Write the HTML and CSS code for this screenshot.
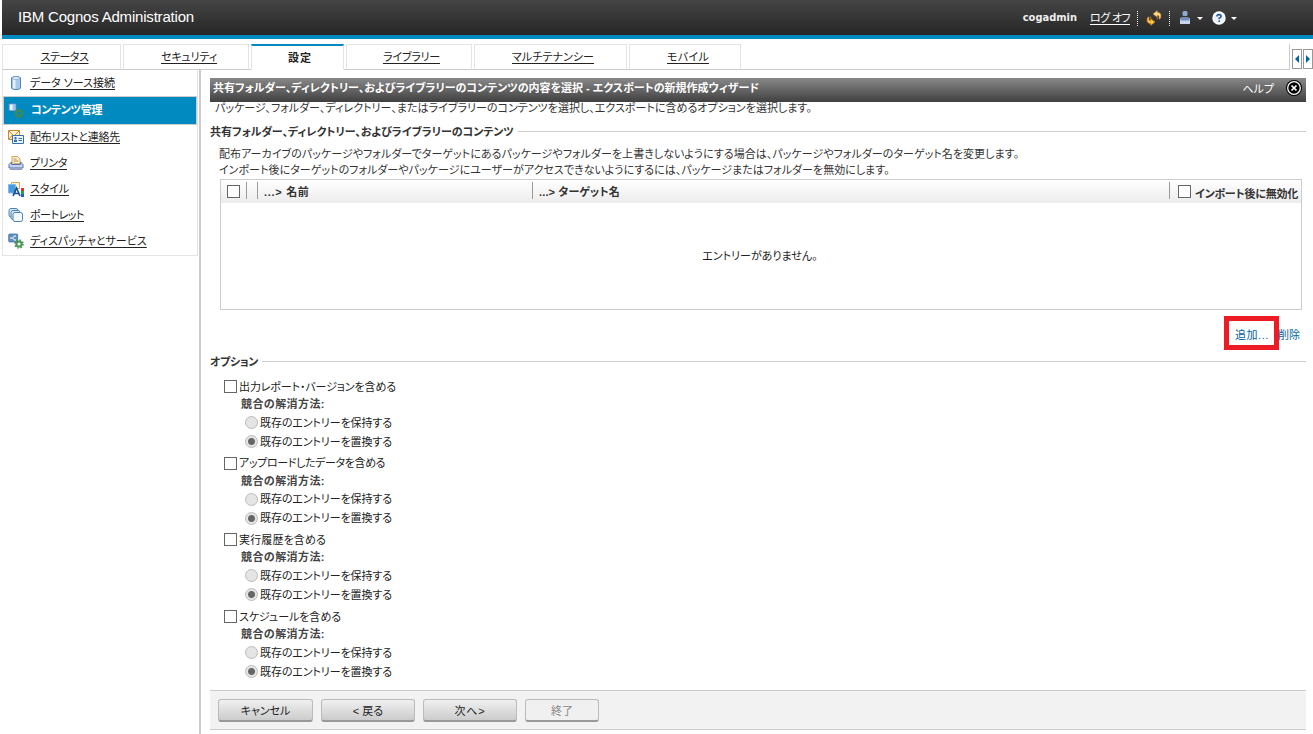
FILE: index.html
```
<!DOCTYPE html>
<html lang="ja">
<head>
<meta charset="utf-8">
<title>IBM Cognos Administration</title>
<link rel="stylesheet" href="styles.css">
</head>
<body>
<div class="banner">
	<span class="product">IBM Cognos Administration</span>
	<span class="user">cogadmin</span>
	<a class="logoff">ログ オフ</a>
	<span class="sep"></span>
	<svg class="refresh" width="16" height="16" viewBox="0 0 16 16"><path d="M11.300 9.500V7.500L7 4.200L11.300 .8V2.700H13L14.800 4.500V8.300L13 9.500V6.500L12.300 5.700H11.300z" transform="translate(0 -.3)" fill="#ffd98a" stroke="#c98718" stroke-width=".5"/><path d="M4.700 6.700V8.700L9 12L4.700 15.400V13.500H3L1.200 11.700V7.900L3 6.700V9.700L3.700 10.500H4.700z" fill="#ffc040" stroke="#c98718" stroke-width=".5"/></svg>
	<span class="sep"></span>
	<svg class="person" width="12" height="14" viewBox="0 0 12 14"><rect x="3.500" y="0" width="5" height="5" rx="1.500" fill="#8fa9d4"/><path d="M1 13V8Q1 6.500 3 6.500H9Q11 6.500 11 8V13z" fill="#c8d6ec"/><path d="M1.500 7h9v2.500h-9z" fill="#6f8fc4"/></svg>
	<span class="caret"></span>
	<svg class="question" width="14" height="14" viewBox="0 0 14 14"><circle cx="7" cy="7" r="6.700" fill="#fff"/><circle cx="7" cy="7" r="5.200" fill="#eaf2fb"/><path d="M5 5.500Q5 3.700 7 3.700T9 5.400Q9 6.300 7.200 7.300V8.300M7.200 9.500V11" fill="none" stroke="#2a5d9f" stroke-width="1.700"/></svg>
	<span class="caret"></span>
</div>

<div class="tabs">
	<div class="tab status"><a>ステータス</a></div>
	<div class="tab security"><a>セキュリティ</a></div>
	<div class="tab settings active"><span>設定</span></div>
	<div class="tab library"><a>ライブラリー</a></div>
	<div class="tab tenancy"><a>マルチテナンシー</a></div>
	<div class="tab mobile"><a>モバイル</a></div>
	<div class="tabrest"></div>
	<div class="scrollers">
		<span class="scroller"><svg width="4" height="8" viewBox="0 0 4 8"><path d="M4 0V8L0 4z" fill="#00649d"/></svg></span>
		<span class="scroller"><svg width="4" height="8" viewBox="0 0 4 8"><path d="M0 0V8L4 4z" fill="#00649d"/></svg></span>
	</div>
</div>

<div class="main">
	<div class="side">
		<ul class="menu">
			<li><svg width="16" height="16" viewBox="0 0 16 16"><path d="M3.500 3Q3.500 1.500 8 1.500T12.500 3V13Q12.500 14.500 8 14.500T3.500 13z" fill="#a5c8ee" stroke="#5584bd"/><path d="M5 4.500h2.500v9H5z" fill="#e4f0fc"/><ellipse cx="8" cy="3" rx="4" ry="1.300" fill="#e9f3fd" stroke="#6b97cb" stroke-width=".6"/></svg><a>データ ソース接続</a></li>
			<li class="current"><svg width="16" height="16" viewBox="0 0 16 16"><path d="M.8 2.500Q.8 1.500 4.500 1.500T8.200 2.500V8Q8.200 9 4.500 9T.8 8z" fill="#9cc6ee" stroke="#3f77b5" stroke-width=".7"/><path d="M2 2.700h2.500v5.300h-2.500z" fill="#f2f8fe"/><circle cx="11" cy="11.500" r="2.700" fill="none" stroke="#3f8a55" stroke-width="2"/><circle cx="11" cy="11.500" r="4" fill="none" stroke="#3f8a55" stroke-width="1.500" stroke-dasharray="1.570"/></svg><b class="manage">コンテンツ管理</b></li>
			<li><svg width="16" height="16" viewBox="0 0 16 16"><path d="M.5 1.500h11v9H.5z" fill="#fff1cf" stroke="#c98a35"/><path d="M1 2l5 5l5-5M1 10l3.500-4" fill="none" stroke="#c98a35"/><path d="M4.500 6.500h11v8h-11z" fill="#edf5ff" stroke="#3a6ea9"/><path d="M6 13v-2h3v2zM6.500 8h2v2.500h-2z" fill="#3a6ea9"/><path d="M10.500 9.500H14M10.500 11.500H14" stroke="#3a6ea9"/></svg><a class="contacts">配布リストと連絡先</a></li>
			<li><svg width="16" height="16" viewBox="0 0 16 16"><path d="M4 8V1.500h5.500L12 4v5z" fill="#fff2d2" stroke="#d0a251"/><path d="M5.500 4h3M5.500 6h5" stroke="#a98b58"/><path d="M3.500 7L1 9.500V13h14V9.500L12.500 7V9.500h-9z" fill="#c4d3ee" stroke="#5a6fae"/><path d="M2 13.500h12v1.500H2z" fill="#8e9bc8"/></svg><a class="printers">プリンタ</a></li>
			<li><svg width="16" height="16" viewBox="0 0 16 16"><path d="M3.500 1.500h8v6h-8z" fill="#fff7df" stroke="#d9a74d"/><path d="M.5 3.500h7v8.500h-7z" fill="#4a9ae0" stroke="#7dbaf0"/><path d="M5 15L8.500 7L12 15M6.500 12.500h4" fill="none" stroke="#174f91" stroke-width="1.700"/><path d="M13 7h3v3h-3z" fill="#d33"/><path d="M13 10h3v3h-3z" fill="#2aa34a"/><path d="M13 13h3v3h-3z" fill="#2563b8"/></svg><a class="styles">スタイル</a></li>
			<li><svg width="16" height="16" viewBox="0 0 16 16"><g fill="#d9eafa" stroke="#4b80b0"><rect x="1" y="1.500" width="9" height="8.500" rx="2"/><rect x="3" y="3.500" width="9" height="9" rx="2"/><rect x="5" y="5.500" width="9.500" height="9" rx="2" fill="#f2f9ff"/></g></svg><a class="portlets">ポートレット</a></li>
			<li><svg width="16" height="16" viewBox="0 0 16 16"><rect x=".7" y="1" width="9" height="8" rx="1" fill="#5e8fc6" stroke="#38679c" stroke-width=".7"/><path d="M2 5h2.500L6.500 3M4.500 5L6.500 7M6 3h2M6 7h2" fill="none" stroke="#fff"/><circle cx="11" cy="11" r="2.600" fill="none" stroke="#489555" stroke-width="2"/><circle cx="11" cy="11" r="4" fill="none" stroke="#489555" stroke-width="1.600" stroke-dasharray="1.570"/></svg><a>ディスパッチャとサービス</a></li>
		</ul>
	</div>

	<div class="content">
		<div class="titlebar">
			<b class="title">共有フォルダー、ディレクトリー、およびライブラリーのコンテンツの内容を選択 - エクスポートの新規作成ウィザード</b>
			<span class="help">ヘルプ</span>
			<svg width="16" height="16" viewBox="0 0 16 16"><circle cx="8" cy="8" r="8" fill="#000"/><circle cx="8" cy="8" r="6.300" fill="none" stroke="#fff" stroke-width="1.300"/><path d="M5.500 5.500l5 5M10.500 5.500l-5 5" stroke="#fff" stroke-width="1.700"/></svg>
		</div>
		<div class="intro"><span>パッケージ、フォルダー、ディレクトリー、またはライブラリーのコンテンツを選択し、エクスポートに含めるオプションを選択します。</span></div>
		<div class="section contents"><b>共有フォルダー、ディレクトリー、およびライブラリーのコンテンツ</b></div>
		<div class="hint">
			<div><span class="hint1">配布アーカイブのパッケージやフォルダーでターゲットにあるパッケージやフォルダーを上書きしないようにする場合は、パッケージやフォルダーのターゲット名を変更します。</span></div>
			<div><span class="hint2">インポート後にターゲットのフォルダーやパッケージにユーザーがアクセスできないようにするには、パッケージまたはフォルダーを無効にします。</span></div>
		</div>

		<div class="grid">
			<div class="gridhead">
				<div class="col check"><span class="box"></span></div>
				<div class="col blank"></div>
				<div class="col name"><b>...&gt; 名前</b></div>
				<div class="col target"><b>...&gt; ターゲット名</b></div>
				<div class="col disable"><span class="box"></span><b>インポート後に無効化</b></div>
			</div>
			<div class="empty"><span>エントリーがありません。</span></div>
		</div>
		<div class="actions">
			<a class="add"><span>追加...</span><i class="mark"></i></a>
			<a class="remove">削除</a>
		</div>

		<div class="section options"><b>オプション</b></div>
		<div class="group">
			<div class="opt"><span class="box"></span><span class="reports">出力レポート・バージョンを含める</span></div>
			<div class="how"><b>競合の解消方法:</b></div>
			<div class="choice"><span class="radio"></span><span class="label">既存のエントリーを保持する</span></div>
			<div class="choice"><span class="radio on"></span><span class="label">既存のエントリーを置換する</span></div>
		</div>
		<div class="group">
			<div class="opt"><span class="box"></span><span class="uploads">アップロードしたデータを含める</span></div>
			<div class="how"><b>競合の解消方法:</b></div>
			<div class="choice"><span class="radio"></span><span class="label">既存のエントリーを保持する</span></div>
			<div class="choice"><span class="radio on"></span><span class="label">既存のエントリーを置換する</span></div>
		</div>
		<div class="group">
			<div class="opt"><span class="box"></span><span class="history">実行履歴を含める</span></div>
			<div class="how"><b>競合の解消方法:</b></div>
			<div class="choice"><span class="radio"></span><span class="label">既存のエントリーを保持する</span></div>
			<div class="choice"><span class="radio on"></span><span class="label">既存のエントリーを置換する</span></div>
		</div>
		<div class="group">
			<div class="opt"><span class="box"></span><span class="schedules">スケジュールを含める</span></div>
			<div class="how"><b>競合の解消方法:</b></div>
			<div class="choice"><span class="radio"></span><span class="label">既存のエントリーを保持する</span></div>
			<div class="choice"><span class="radio on"></span><span class="label">既存のエントリーを置換する</span></div>
		</div>

		<div class="footer">
			<button class="cancel">キャンセル</button>
			<button>&lt; 戻る</button>
			<button class="next">次へ&gt;</button>
			<button class="finish" disabled>終了</button>
		</div>
	</div>
</div>
</body>
</html>
```
FILE: styles.css
```
* {
  box-sizing: border-box;
}

body {
  margin: 0;
  height: 734px;
  overflow: hidden;
  background: #fff;
  color: #222;
  font: 11px/16px "Liberation Sans", "Noto Sans CJK JP", sans-serif;
  font-feature-settings: "palt";
}

b, span, a {
  white-space: nowrap;
}

svg {
  display: block;
  flex: none;
}

/* top banner */
.banner {
  display: flex;
  align-items: center;
  height: 39px;
  margin-left: 2px;
  padding: 1px 76px 0 16px;
  background: linear-gradient(#454545, #262626 35px);
  border-bottom: 4px solid #008abf;
  color: #fff;
}

.product {
  margin-right: auto;
  padding-bottom: 2px;
  font-size: 15px;
  letter-spacing: -0.2px;
}

.user {
  font: bold 11px/16px "DejaVu Sans Condensed", "DejaVu Sans", sans-serif;
  margin-right: 13px;
  color: #eee;
}

.logoff {
  text-decoration: underline;
  text-underline-offset: 2px;
  letter-spacing: -0.61px;
  margin-right: 7px;
}

.sep {
  height: 15px;
  border-left: 1px dotted #fff;
}

.refresh {
  margin: 0 7px 0 8px;
}

.person {
  margin: 0 6px 0 9px;
}

.caret {
  border: 3px solid transparent;
  border-top-color: #fff;
  border-bottom: 0;
}

.question {
  margin: 0 5px 0 9px;
}

/* tabs, the line under them runs through the gaps */
.tabs {
  display: flex;
  height: 31px;
  padding: 5px 0 0 2px;
  background: linear-gradient(#ccc, #ccc) 2px 100% / 1287px 1px no-repeat;
}

.tab {
  height: 26px;
  margin-right: 2px;
  border: 1px solid #e4e4e4;
  border-bottom-color: #ccc;
  text-align: center;
  line-height: 24px;
}

.tab a, .menu a {
  text-decoration: underline;
  text-underline-offset: 2px;
}

.tab.active {
  background: #fff;
  border-top: 2px solid #008abf;
  border-bottom-color: #fff;
  font-weight: bold;
}

.status { width: 119px; padding-left: 6px; letter-spacing: -0.44px; }
.security { width: 126px; padding-left: 6px; letter-spacing: -0.15px; }
.settings { width: 93px; padding-left: 5px; letter-spacing: 1px; }
.library { width: 126px; padding-left: 5px; letter-spacing: -0.2px; }
.tenancy { width: 153px; padding-left: 5px; letter-spacing: 0.07px; }
.mobile { width: 112px; padding-left: 6px; letter-spacing: 0.29px; }

.tabrest {
  flex: 1;
  margin-left: -2px;
  border-right: 1px solid #ccc;
  border-bottom: 1px solid #ccc;
}

.scrollers {
  display: flex;
  gap: 1px;
  margin: 5px 0 0 2px;
}

.scroller {
  display: flex;
  align-items: center;
  justify-content: center;
  width: 10px;
  height: 20px;
  border: 1px solid #999;
}

/* left menu */
.main {
  display: flex;
  height: 664px;
}

.side {
  width: 201px;
  flex: none;
  padding-left: 2px;
  border-right: 2px solid #ccc;
}

.menu {
  list-style: none;
  margin: 0;
  padding: 0;
  width: 196px;
  height: 186px;
  border: 1px solid #e4e4e4;
  border-top: 0;
}

.menu li {
  display: flex;
  align-items: center;
  gap: 6px;
  height: 26px;
  padding-left: 5px;
}

.menu li.current {
  height: 29px;
  margin-bottom: -1px;
  padding: 0 0 2px 4px;
  gap: 7px;
  background: #008abf;
  border: 1px solid #ccc;
  color: #fff;
}

.manage { letter-spacing: -0.37px; }
.contacts { letter-spacing: -0.23px; }
.printers { letter-spacing: -0.38px; }
.styles { letter-spacing: -0.12px; }
.portlets { letter-spacing: -0.45px; }

/* wizard page */
.content {
  flex: 1;
  padding: 8px 7px 0 9px;
}

.titlebar {
  display: flex;
  align-items: flex-start;
  height: 24px;
  padding: 2px 4px 0 3px;
  background: linear-gradient(#888, #404040);
  color: #fff;
}

.title {
  letter-spacing: -0.02px;
}

.help {
  margin: 1px 12px 0 auto;
}

.intro {
  height: 20px;
  padding: 1px 0 0 5px;
  line-height: 11px;
  letter-spacing: 0.02px;
  color: #333;
}

.section {
  display: flex;
  align-items: center;
  gap: 4px;
  height: 18px;
  color: #333;
}

.section b {
  padding-top: 2px;
}

.section::after {
  content: "";
  flex: 1;
  height: 1px;
  background: #ccc;
}

.contents {
  letter-spacing: -0.05px;
}

.hint {
  height: 39px;
  padding: 6px 0 0 9px;
  color: #333;
}

.hint1 { letter-spacing: 0.04px; }
.hint2 { letter-spacing: 0.03px; }

.grid {
  height: 131px;
  margin: 0 4px 0 10px;
  border: 1px solid #ccc;
}

.gridhead {
  display: flex;
  height: 23px;
  padding-top: 2px;
  background: linear-gradient(#fff, #ececec);
  color: #333;
}

.col {
  display: flex;
  align-items: flex-start;
  height: 17px;
  padding-left: 6px;
  border-left: 1px solid #999;
}

.col b {
  padding-top: 2px;
}

.check { width: 25px; border: 0; }
.blank { width: 11px; }
.name { width: 275px; letter-spacing: 0.7px; }
.target { flex: 1; letter-spacing: 0.15px; }
.disable { width: 132px; padding-left: 8px; gap: 4px; letter-spacing: -0.21px; }

.disable b {
  padding-top: 4px;
}

.box {
  flex: none;
  width: 13px;
  height: 13px;
  border: 1px solid #666;
  background: #fff;
}

.col .box {
  margin-top: 3px;
}

.empty {
  padding: 45px 2px 0 0;
  text-align: center;
}

.actions {
  display: flex;
  justify-content: flex-end;
  height: 42px;
  padding: 17px 6px 0 0;
  color: #00649d;
}

.add {
  position: relative;
  margin-right: 9px;
  letter-spacing: 0.57px;
}

/* red frame round the add link */
.mark {
  position: absolute;
  left: -11px;
  top: -11px;
  width: 55px;
  height: 34px;
  border: 5px solid #ed1c24;
}

.options {
  margin-bottom: 8px;
  letter-spacing: -0.35px;
}

.group {
  height: 76.7px;
  padding-left: 14px;
}

.opt, .how, .choice {
  display: flex;
  align-items: center;
  height: 18px;
}

.opt {
  height: 17px;
  gap: 2px;
}

.how {
  padding-left: 17px;
  letter-spacing: 0.43px;
  color: #444;
}

.choice {
  height: 19px;
  padding-left: 21px;
  gap: 2px;
}

.label { letter-spacing: -0.09px; }
.reports { letter-spacing: -0.11px; }
.uploads { letter-spacing: -0.38px; }
.history { letter-spacing: 0.13px; }
.schedules { letter-spacing: -0.06px; }

.radio {
  width: 13px;
  height: 13px;
  border: 1px solid #bbb;
  border-radius: 50%;
  background: #e4e4e4;
}

.radio.on {
  background: radial-gradient(#666 3px, #e4e4e4 4px);
}

.footer {
  display: flex;
  gap: 8px;
  height: 40px;
  padding: 8px;
  margin-top: 5.2px;
  background: #f2f2f2;
  border: 1px solid #ccc;
  border-width: 1px 0;
}

.footer button {
  width: 94px;
  height: 23px;
  padding: 2px 0 0;
  border: 1px solid #bbb;
  border-bottom: 2px solid #999;
  border-radius: 3px;
  background: linear-gradient(#f0f0f0, #ccc);
  font: inherit;
  font-feature-settings: "palt";
  color: #222;
}

.footer .cancel {
  width: 95px;
}

.footer .next {
  letter-spacing: 0.8px;
}

.footer .finish {
  width: 74px;
  background: #f0f0f0;
  color: #888;
}
```
